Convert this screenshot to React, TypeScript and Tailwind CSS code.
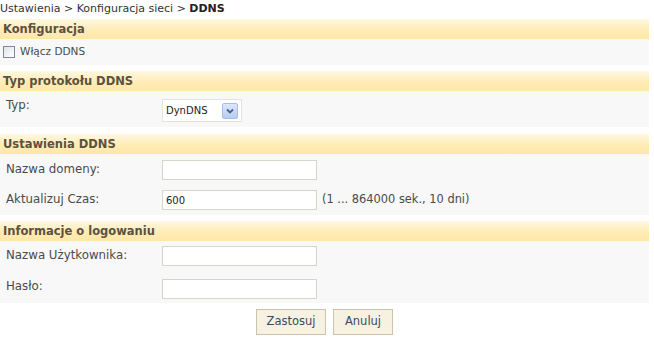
import React from 'react';

const font = "font-['DejaVu_Sans',Verdana,sans-serif]";

function SectionHeader({ title }: { title: string }) {
  return (
    <div className="h-[20px] w-[649px] bg-gradient-to-b from-[#fff7e2] via-[#ffedb8] to-[#ffe7a6] pl-[3px] text-[11.5px] font-bold leading-[20px] text-[#5b5140]">
      {title}
    </div>
  );
}

function Field({ label, value, hint }: { label: string; value?: string; hint?: string }) {
  return (
    <div className="flex h-[30px] items-center">
      <div className="w-[162px] pl-[6px] text-[11.8px] text-[#4a4a4a]">{label}</div>
      <div className="flex h-[20px] w-[155px] items-center border border-[#d5d5cc] bg-white pl-[3px] text-[10px] text-[#222]">
        {value}
      </div>
      {hint && <div className="ml-[5px] text-[11.4px] text-[#4a4a4a]">{hint}</div>}
    </div>
  );
}

export default function App() {
  return (
    <div className={`${font} h-[342px] w-[654px] bg-white`}>
      {/* breadcrumb */}
      <div className="h-[19px] pt-[1px] text-[11px] leading-[16px] text-[#333]">
        Ustawienia &gt; Konfiguracja sieci &gt; <span className="font-bold text-[#222]">DDNS</span>
      </div>

      {/* Konfiguracja */}
      <SectionHeader title="Konfiguracja" />
      <div className="flex h-[26px] w-[649px] items-center bg-[#f8f8f8] pl-[3px]">
        <span className="h-[12px] w-[12px] border border-[#7a8a99] bg-gradient-to-br from-[#dfe3e8] to-white" />
        <span className="ml-[5px] text-[10.5px] text-[#4a4a4a]">Włącz DDNS</span>
      </div>

      {/* Typ protokolu */}
      <div className="h-[6px]" />
      <SectionHeader title="Typ protokołu DDNS" />
      <div className="flex h-[36px] w-[649px] items-start bg-[#f8f8f8] pt-[6px]">
        <div className="w-[162px] pl-[6px] text-[11.8px] text-[#4a4a4a]">Typ:</div>
        <div className="mt-[2px] flex h-[23px] w-[80px] items-center justify-between border border-[#e3e3dc] bg-white pl-[3px] pr-[3px]">
          <span className="text-[10px] text-[#222]">DynDNS</span>
          <span className="flex h-[16px] w-[16px] items-center justify-center rounded-[2px] border border-[#a9bde6] bg-gradient-to-b from-[#dce7fb] to-[#b8cdf4]">
            <svg width="8" height="6" viewBox="0 0 8 6">
              <path d="M1 1.5 L4 4.5 L7 1.5" stroke="#4d6185" strokeWidth="1.8" fill="none" />
            </svg>
          </span>
        </div>
      </div>

      {/* Ustawienia DDNS */}
      <div className="h-[7px]" />
      <SectionHeader title="Ustawienia DDNS" />
      <div className="w-[649px] bg-[#f8f8f8] pt-[1px]">
        <Field label="Nazwa domeny:" />
        <Field label="Aktualizuj Czas:" value="600" hint="(1 ... 864000 sek., 10 dni)" />
      </div>

      {/* Informacje o logowaniu */}
      <div className="h-[6px]" />
      <SectionHeader title="Informacje o logowaniu" />
      <div className="w-[649px] bg-[#f8f8f8]">
        <div className="flex h-[30px] items-center">
          <div className="w-[162px] pl-[6px] text-[11.8px] text-[#4a4a4a]">Nazwa Użytkownika:</div>
          <div className="h-[20px] w-[155px] border border-[#d5d5cc] bg-white" />
        </div>
        <div className="flex h-[32px] items-center">
          <div className="w-[162px] pl-[6px] text-[11.8px] text-[#4a4a4a]">Hasło:</div>
          <div className="mt-[4px] h-[20px] w-[155px] border border-[#d5d5cc] bg-white" />
        </div>
      </div>

      {/* buttons */}
      <div className="flex w-[649px] justify-center gap-[7px] pt-[6px]">
        <button className="h-[26px] w-[70px] border border-[#cbc3ab] bg-[#f6f1e1] text-[11.5px] text-[#3b4a6b]">
          Zastosuj
        </button>
        <button className="h-[26px] w-[60px] border border-[#cbc3ab] bg-[#f6f1e1] text-[11.5px] text-[#3b4a6b]">
          Anuluj
        </button>
      </div>
    </div>
  );
}
